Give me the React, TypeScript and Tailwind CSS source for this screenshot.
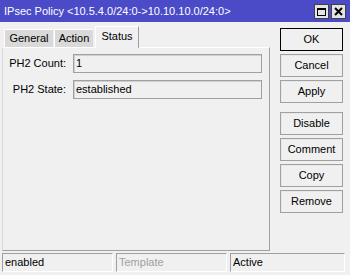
import React from 'react';

const font = { fontFamily: '"Liberation Sans", Arial, sans-serif' };

const Btn: React.FC<{ children: React.ReactNode; primary?: boolean; className?: string }> = ({ children, primary, className = '' }) => (
  <div
    className={`h-[23px] w-[63px] flex items-center justify-center text-[11px] text-black bg-[#f0f0f0] border ${
      primary ? 'border-black' : 'border-[#a0a0a0] shadow-[inset_1px_1px_0_#e8e8e8]'
    } ${className}`}
  >
    {children}
  </div>
);

const Field: React.FC<{ label: string; value: string }> = ({ label, value }) => (
  <div className="flex items-center h-[19px]">
    <div className="w-[64px] text-right pr-[1px] text-[11px] text-black">{label}</div>
    <div className="ml-[6px] w-[189px] h-[19px] border border-[#a0a0a0] shadow-[inset_1px_1px_0_#d0d0d0] flex items-center pl-[2px] text-[11px] text-black">
      {value}
    </div>
  </div>
);

const StatusCell: React.FC<{ children: React.ReactNode; className?: string; muted?: boolean }> = ({ children, className = '', muted }) => (
  <div
    className={`h-[19px] flex items-center pl-[2px] text-[11px] border-t border-l border-[#a0a0a0] border-b-white border-r-white border-b border-r ${
      muted ? 'text-[#a0a0a0]' : 'text-black'
    } ${className}`}
  >
    {children}
  </div>
);

export default function App() {
  return (
    <div style={font} className="w-[350px] h-[275px] bg-[#f0f0f0] flex flex-col overflow-hidden">
      {/* title bar */}
      <div className="h-[22px] bg-[#4b4bc8] flex items-center pl-[4px] pr-[4px]">
        <span className="text-white text-[11px] flex-1 whitespace-nowrap">
          IPsec Policy &lt;10.5.4.0/24:0-&gt;10.10.10.0/24:0&gt;
        </span>
        <div className="flex gap-[2px] mt-[1px]">
          <div className="w-[15px] h-[15px] bg-[#e4e4e4] border border-[#404040] flex items-center justify-center">
            <div className="w-[9px] h-[8px] border border-black border-t-2" />
          </div>
          <div className="w-[15px] h-[15px] bg-[#e4e4e4] border border-[#404040] flex items-center justify-center">
            <svg width="9" height="9" viewBox="0 0 9 9">
              <path d="M1 1 L8 8 M8 1 L1 8" stroke="black" strokeWidth="2" />
            </svg>
          </div>
        </div>
      </div>

      {/* body */}
      <div className="h-[231px] flex px-[2px]">
        <div className="w-[268px] flex flex-col">
          {/* tabs */}
          <div className="h-[25px] flex items-end text-[11px] text-black">
            <div className="ml-[2px] w-[49px] h-[18px] bg-[#d9d9d9] border-t border-l border-white flex items-center justify-center">General</div>
            <div className="ml-[1px] w-[39px] h-[18px] bg-[#d9d9d9] border-t border-l border-white flex items-center justify-center">Action</div>
            <div className="ml-[2px] w-[44px] h-[22px] bg-[#f0f0f0] border-t border-l border-r border-white border-r-[#a0a0a0] flex items-center justify-center pb-[3px] -mb-[1px] relative z-10">Status</div>
          </div>
          {/* panel */}
          <div className="h-[204px] border border-white border-l-[#d8d8d8] border-r-[#a0a0a0] border-b-[#a0a0a0] pt-[6px] flex flex-col gap-[7px]">
            <Field label="PH2 Count:" value="1" />
            <Field label="PH2 State:" value="established" />
          </div>
        </div>

        {/* buttons */}
        <div className="ml-[10px] pt-[6px] flex flex-col gap-[3px]">
          <Btn primary>OK</Btn>
          <Btn>Cancel</Btn>
          <Btn>Apply</Btn>
          <Btn className="mt-[6px]">Disable</Btn>
          <Btn>Comment</Btn>
          <Btn>Copy</Btn>
          <Btn>Remove</Btn>
        </div>
      </div>

      {/* status bar */}
      <div className="flex gap-[3px] px-[2px]">
        <StatusCell className="w-[111px]">enabled</StatusCell>
        <StatusCell className="w-[111px]" muted>Template</StatusCell>
        <StatusCell className="w-[115px]">Active</StatusCell>
      </div>
    </div>
  );
}
